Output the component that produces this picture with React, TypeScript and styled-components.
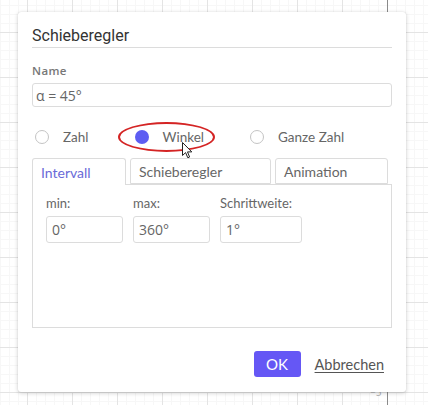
import { FC } from 'react';
import styled, { createGlobalStyle } from 'styled-components';

const GlobalStyle = createGlobalStyle`
  html, body {
    margin: 0;
    padding: 0;
    background: #fff;
  }
  * {
    box-sizing: border-box;
  }
`;

const ACCENT = '#6557f5';

const tabs = [
  { label: 'Intervall', width: 94 },
  { label: 'Schieberegler', width: 141 },
  { label: 'Animation', width: 113 },
];

const fields = [
  { label: 'min:', value: '0°', width: 77 },
  { label: 'max:', value: '360°', width: 77 },
  { label: 'Schrittweite:', value: '1°', width: 82 },
];

const Radio: FC<{ label: string; checked?: boolean }> = ({ label, checked }) => (
  <RadioItem>
    <RadioDot $checked={checked} />
    <RadioLabel>{label}</RadioLabel>
  </RadioItem>
);

export default function App() {
  return (
    <>
      <GlobalStyle />
      <Canvas>
        <YAxis />
        <AxisLabel>−5</AxisLabel>
        <Dialog>
          <Title>Schieberegler</Title>
          <FieldLabel>Name</FieldLabel>
          <NameInput>α = 45°</NameInput>

          <RadioRow>
            <Radio label="Zahl" />
            <Radio label="Winkel" checked />
            <Radio label="Ganze Zahl" />
          </RadioRow>

          <TabBar>
            {tabs.map((t, i) => (
              <Tab key={t.label} $active={i === 0} style={{ width: t.width }}>
                {t.label}
              </Tab>
            ))}
          </TabBar>
          <Panel>
            {fields.map((f) => (
              <Field key={f.label}>
                <SmallLabel>{f.label}</SmallLabel>
                <SmallInput style={{ width: f.width }}>{f.value}</SmallInput>
              </Field>
            ))}
          </Panel>

          <Footer>
            <OkButton>OK</OkButton>
            <CancelLink>Abbrechen</CancelLink>
          </Footer>
        </Dialog>

        <Highlight />
        <Cursor viewBox="0 0 11 17" width="11" height="17">
          <path
            d="M0.5 0.5 L0.5 13.5 L3.6 10.6 L5.8 15.8 L7.6 15 L5.5 9.9 L9.8 9.9 Z"
            fill="#fff"
            stroke="#222"
            strokeWidth="1"
            strokeLinejoin="round"
          />
        </Cursor>
      </Canvas>
    </>
  );
}

const Canvas = styled.div`
  position: relative;
  width: 428px;
  height: 405px;
  overflow: hidden;
  padding: 12px 0 0 18px;
  font-family: Lato, 'Open Sans', sans-serif;
  background-color: #fff;
  background-image: linear-gradient(to right, #e4e4e4 1px, transparent 1px),
    linear-gradient(to bottom, #e4e4e4 1px, transparent 1px),
    linear-gradient(to right, #f7f7f7 1px, transparent 1px),
    linear-gradient(to bottom, #f7f7f7 1px, transparent 1px);
  background-size: 45px 45px, 45px 45px, 9px 9px, 9px 9px;
  background-position: 27px 32px, 27px 32px, 0px 5px, 0px 5px;
`;

const YAxis = styled.div`
  position: absolute;
  left: 387px;
  top: 0;
  width: 1px;
  height: 100%;
  background: #8a8a8a;
`;

const AxisLabel = styled.span`
  position: absolute;
  left: 370px;
  top: 386px;
  font-size: 10px;
  color: #aaa;
`;

const Dialog = styled.div`
  position: relative;
  width: 388px;
  display: flex;
  flex-direction: column;
  padding: 14px 14px 15px 14px;
  background: #fff;
  border-radius: 3px;
  box-shadow: 0 1px 4px rgba(0, 0, 0, 0.2), 0 0 1px rgba(0, 0, 0, 0.15);
`;

const Title = styled.h2`
  margin: 0;
  padding-bottom: 1px;
  font-family: Roboto, 'Open Sans', sans-serif;
  font-size: 16px;
  font-weight: 400;
  line-height: 20px;
  color: #333;
  border-bottom: 1px solid #dcdcdc;
`;

const FieldLabel = styled.div`
  margin-top: 15px;
  font-family: 'Open Sans', sans-serif;
  font-size: 11.5px;
  font-weight: 600;
  line-height: 16px;
  letter-spacing: 0.4px;
  color: #777;
`;

const NameInput = styled.div`
  margin-top: 4px;
  height: 24px;
  padding: 0 3px;
  display: flex;
  align-items: center;
  border: 1px solid #dcdcdc;
  border-radius: 3px;
  font-family: 'Open Sans', sans-serif;
  font-size: 14px;
  color: #666;
`;

const RadioRow = styled.div`
  margin-top: 20px;
  height: 20px;
  padding-left: 3px;
  display: flex;
  align-items: center;
  gap: 46px;
`;

const RadioItem = styled.label`
  display: flex;
  align-items: center;
  gap: 14px;
`;

const RadioDot = styled.span<{ $checked?: boolean }>`
  width: 14px;
  height: 14px;
  border-radius: 50%;
  border: ${(p) => (p.$checked ? 'none' : '1.5px solid #c4c4c4')};
  background: ${(p) => (p.$checked ? '#5d5df2' : '#fff')};
`;

const RadioLabel = styled.span`
  font-size: 13.5px;
  color: #666;
`;

const TabBar = styled.div`
  margin-top: 11px;
  display: flex;
  gap: 4px;
  height: 26px;
`;

const Tab = styled.div<{ $active?: boolean }>`
  position: relative;
  z-index: 1;
  height: ${(p) => (p.$active ? '27px' : '26px')};
  padding-left: 8px;
  display: flex;
  align-items: center;
  font-size: 14px;
  color: ${(p) => (p.$active ? '#6a6ad8' : '#666')};
  background: #fff;
  border: 1px solid #dcdcdc;
  border-bottom: ${(p) => (p.$active ? 'none' : '1px solid #dcdcdc')};
  border-radius: 3px 3px 0 0;
`;

const Panel = styled.div`
  height: 144px;
  padding: 10px 13px;
  display: flex;
  align-items: flex-start;
  gap: 10px;
  border: 1px solid #dcdcdc;
`;

const Field = styled.div`
  display: flex;
  flex-direction: column;
  gap: 5px;
`;

const SmallLabel = styled.span`
  font-size: 13px;
  line-height: 16px;
  color: #666;
`;

const SmallInput = styled.div`
  height: 27px;
  padding: 0 5px;
  display: flex;
  align-items: center;
  border: 1px solid #dcdcdc;
  border-radius: 3px;
  font-family: 'Open Sans', sans-serif;
  font-size: 14px;
  color: #666;
`;

const Footer = styled.div`
  margin-top: 23px;
  display: flex;
  justify-content: flex-end;
  align-items: center;
  gap: 14px;
  padding-right: 8px;
`;

const OkButton = styled.button`
  width: 47px;
  height: 26px;
  border: none;
  border-radius: 3px;
  background: ${ACCENT};
  color: #fff;
  font-family: Lato, sans-serif;
  font-size: 15px;
  cursor: pointer;
`;

const CancelLink = styled.a`
  font-size: 14.5px;
  color: #555;
  text-decoration: underline;
  text-underline-offset: 2px;
`;

const Highlight = styled.div`
  position: absolute;
  left: 118px;
  top: 122px;
  width: 97px;
  height: 30px;
  border: 2px solid #d42424;
  border-radius: 50%;
  pointer-events: none;
`;

const Cursor = styled.svg`
  position: absolute;
  left: 182px;
  top: 142px;
`;
